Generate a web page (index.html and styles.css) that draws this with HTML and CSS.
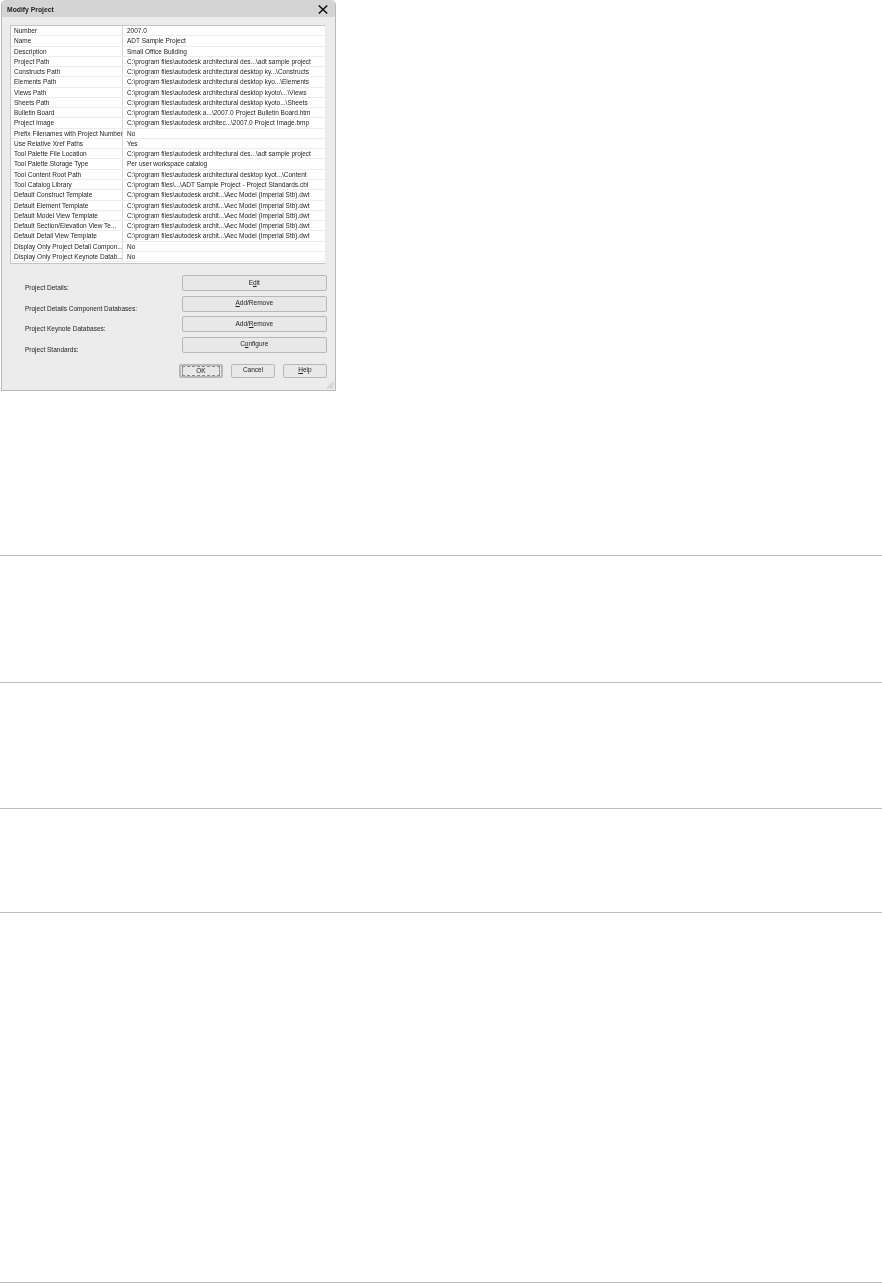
FILE: index.html
```html
<!DOCTYPE html>
<html lang="en">
<head>
    <meta charset="UTF-8">
    <title>Modify Project</title>
    <link rel="stylesheet" href="styles.css">
</head>
<body>
    <div class="dialog">
        <div class="titlebar">
            <span class="title">Modify Project</span>
            <svg class="close" width="10" height="9" viewBox="0 0 10 9">
                <path d="M0.8 0.5 L9.2 8.5 M9.2 0.5 L0.8 8.5" stroke="#111" stroke-width="1.5" fill="none"/>
            </svg>
        </div>
        <div class="dialog-body">
            <div class="props">
                <div class="prop"><span class="key">Number</span><span class="val">2007.0</span></div>
                <div class="prop"><span class="key">Name</span><span class="val">ADT Sample Project</span></div>
                <div class="prop"><span class="key">Description</span><span class="val">Small Office Building</span></div>
                <div class="prop"><span class="key">Project Path</span><span class="val">C:\program files\autodesk architectural des...\adt sample project</span></div>
                <div class="prop"><span class="key">Constructs Path</span><span class="val">C:\program files\autodesk architectural desktop ky...\Constructs</span></div>
                <div class="prop"><span class="key">Elements Path</span><span class="val">C:\program files\autodesk architectural desktop kyo...\Elements</span></div>
                <div class="prop"><span class="key">Views Path</span><span class="val">C:\program files\autodesk architectural desktop kyoto\...\Views</span></div>
                <div class="prop"><span class="key">Sheets Path</span><span class="val">C:\program files\autodesk architectural desktop kyoto...\Sheets</span></div>
                <div class="prop"><span class="key">Bulletin Board</span><span class="val">C:\program files\autodesk a...\2007.0 Project Bulletin Board.htm</span></div>
                <div class="prop"><span class="key">Project Image</span><span class="val">C:\program files\autodesk architec...\2007.0 Project Image.bmp</span></div>
                <div class="prop"><span class="key">Prefix Filenames with Project Number</span><span class="val">No</span></div>
                <div class="prop"><span class="key">Use Relative Xref Paths</span><span class="val">Yes</span></div>
                <div class="prop"><span class="key">Tool Palette File Location</span><span class="val">C:\program files\autodesk architectural des...\adt sample project</span></div>
                <div class="prop"><span class="key">Tool Palette Storage Type</span><span class="val">Per user workspace catalog</span></div>
                <div class="prop"><span class="key">Tool Content Root Path</span><span class="val">C:\program files\autodesk architectural desktop kyot...\Content</span></div>
                <div class="prop"><span class="key">Tool Catalog Library</span><span class="val">C:\program files\...\ADT Sample Project - Project Standards.cbl</span></div>
                <div class="prop"><span class="key">Default Construct Template</span><span class="val">C:\program files\autodesk archit...\Aec Model (Imperial Stb).dwt</span></div>
                <div class="prop"><span class="key">Default Element Template</span><span class="val">C:\program files\autodesk archit...\Aec Model (Imperial Stb).dwt</span></div>
                <div class="prop"><span class="key">Default Model View Template</span><span class="val">C:\program files\autodesk archit...\Aec Model (Imperial Stb).dwt</span></div>
                <div class="prop"><span class="key">Default Section/Elevation View Te...</span><span class="val">C:\program files\autodesk archit...\Aec Model (Imperial Stb).dwt</span></div>
                <div class="prop"><span class="key">Default Detail View Template</span><span class="val">C:\program files\autodesk archit...\Aec Model (Imperial Stb).dwt</span></div>
                <div class="prop"><span class="key">Display Only Project Detail Compon...</span><span class="val">No</span></div>
                <div class="prop"><span class="key">Display Only Project Keynote Datab...</span><span class="val">No</span></div>
            </div>
            <div class="actions">
                <div class="action"><span>Project Details:</span><button class="btn wide">E<u>d</u>it</button></div>
                <div class="action"><span>Project Details Component Databases:</span><button class="btn wide"><u>A</u>dd/Remove</button></div>
                <div class="action"><span>Project Keynote Databases:</span><button class="btn wide">Add/<u>R</u>emove</button></div>
                <div class="action"><span>Project Standards:</span><button class="btn wide">C<u>o</u>nfigure</button></div>
            </div>
            <div class="footer">
                <button class="btn small default"><span class="focus">OK</span></button>
                <button class="btn small">Cancel</button>
                <button class="btn small"><u>H</u>elp</button>
            </div>
        </div>
        <svg class="grip" width="8" height="8" viewBox="0 0 8 8">
            <path d="M7.5 1 L1 7.5 M7.5 3.5 L3.5 7.5 M7.5 6 L6 7.5" stroke="#b4b4b4" stroke-width="1" fill="none"/>
        </svg>
    </div>

    <div class="rules">
        <div class="rule r1"></div>
        <div class="rule r2"></div>
        <div class="rule r3"></div>
        <div class="rule r4"></div>
        <div class="rule r5"></div>
    </div>
</body>
</html>
```

FILE: styles.css
```css
html, body {
    margin: 0;
    padding: 0;
    background: #ffffff;
}

body {
    font-family: "Liberation Sans", Arial, sans-serif;
    font-size: 6.5px;
    color: #222;
    height: 1283px;
    overflow: hidden;
}

.dialog {
    position: relative;
    box-sizing: border-box;
    width: 335px;
    height: 391px;
    margin-left: 1px;
    background: #ececec;
    border: 1px solid #b9b9b9;
    border-top: none;
    border-radius: 5px 5px 0 0;
    display: flex;
    flex-direction: column;
    filter: blur(0.3px);
}

.titlebar {
    height: 17px;
    background: #d4d4d4;
    border-radius: 5px 5px 0 0;
    display: flex;
    align-items: center;
    justify-content: space-between;
    padding: 2px 7px 0 5px;
    box-sizing: border-box;
}

.title {
    font-weight: bold;
    font-size: 6.8px;
    color: #222;
}

.dialog-body {
    display: flex;
    flex-direction: column;
    padding: 8px 8px 0 8px;
}

.props {
    background: #ffffff;
    margin-right: 2px;
    border-top: 1px solid #c4c4c4;
    border-bottom: 1px solid #c4c4c4;
    border-left: 1px solid #c4c4c4;
    height: 239px;
    box-sizing: border-box;
}

.prop {
    display: flex;
    height: 10.27px;
    line-height: 10px;
    border-bottom: 1px solid #ececec;
    box-sizing: border-box;
}

.key {
    width: 112px;
    padding-left: 3px;
    box-sizing: border-box;
    border-right: 1px solid #d8d8d8;
    white-space: nowrap;
    overflow: hidden;
}

.val {
    padding-left: 4px;
    white-space: nowrap;
}

.actions {
    display: flex;
    flex-direction: column;
    gap: 4.67px;
    margin-top: 11px;
}

.action {
    display: flex;
    align-items: flex-end;
    justify-content: space-between;
    height: 16px;
    padding-left: 15px;
}

.action span {
    line-height: 8px;
    margin-bottom: -1px;
}

.btn {
    font-family: inherit;
    font-size: 6.5px;
    color: #222;
    background: #e8e8e8;
    border: 1px solid #b8b8b8;
    border-radius: 2px;
    padding: 0 0 2px;
    height: 16px;
}

.wide {
    width: 145.5px;
}

.footer {
    display: flex;
    justify-content: flex-end;
    gap: 8px;
    margin-top: 11px;
}

.small {
    width: 44px;
    height: 14px;
}

.default {
    border: 2px solid #b8b8b8;
    padding: 0 1px;
}

.focus {
    display: block;
    height: 10px;
    box-sizing: border-box;
    border: 1px dashed #888;
    line-height: 8px;
}

.grip {
    position: absolute;
    right: 1px;
    bottom: 1px;
}

.rules {
    display: flex;
    flex-direction: column;
}

.rule {
    height: 1px;
    background: #bdbdbd;
}

.r1 { margin-top: 164px; }
.r2 { margin-top: 126px; }
.r3 { margin-top: 125px; }
.r4 { margin-top: 103px; }
.r5 { margin-top: 369px; }
```
